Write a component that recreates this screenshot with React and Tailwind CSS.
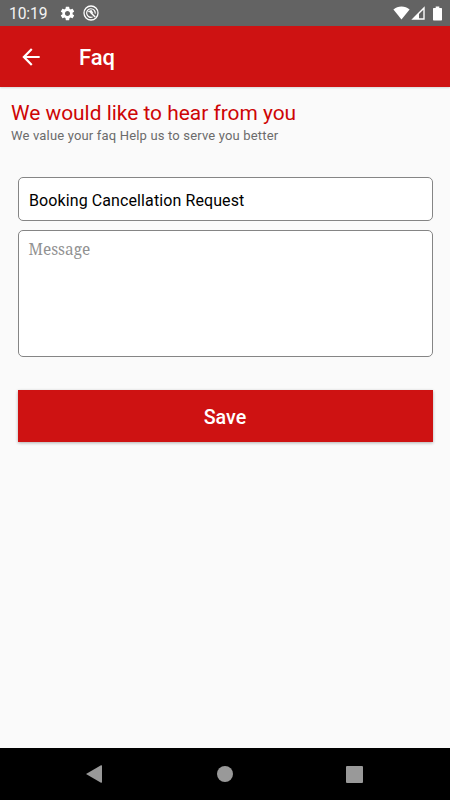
import { useState } from "react";
import { MdArrowBack, MdSettings } from "react-icons/md";

const StatusBar = () => (
  <div className="h-[26px] shrink-0 bg-[#636363] text-white flex items-center justify-between pl-[9px] pr-[8px]">
    <div className="flex items-center">
      <span className="w-[50px] text-[15.6px] leading-[26px] tracking-[-0.1px] whitespace-nowrap pt-[2px] text-[#f4f4f4]">10:19</span>
      <MdSettings size={17} />
      <svg className="ml-[7px]" width="16" height="16" viewBox="0 0 16 16" fill="none" stroke="currentColor">
        <circle cx="8" cy="8" r="7" strokeWidth="1.3" />
        <path d="M9.6 12A4.3 4.3 0 1 1 12.2 8.6" strokeWidth="1.2" />
        <path d="M7.4 7.2L12.2 12" strokeWidth="1.5" />
        <path d="M5.2 6.6L8.4 5.2L10 8.2L7.4 7.2Z" fill="currentColor" strokeWidth="0.6" />
      </svg>
    </div>
    <div className="flex items-center">
      {/* Wifi */}
      <svg width="17" height="14" viewBox="0 0 17 14" fill="currentColor">
        <path d="M8.5 13.6L0.4 3.6C2.6 1.6 5.4 0.5 8.5 0.5S14.4 1.6 16.6 3.6Z" />
      </svg>
      {/* Signal */}
      <svg className="ml-px" width="14" height="14" viewBox="0 0 14 14">
        <path d="M0.3 13.7L13.7 0.3V13.7Z" fill="white" />
        <path d="M8 12.3V8L12.3 3.7V12.3Z" fill="#636363" />
      </svg>
      {/* Battery */}
      <svg className="ml-[8px]" width="9" height="15" viewBox="0 0 9 15" fill="currentColor">
        <path d="M2.7 0.5H6.3V2H8.3Q9 2 9 2.7V13.8Q9 14.5 8.3 14.5H0.7Q0 14.5 0 13.8V2.7Q0 2 0.7 2H2.7Z" />
      </svg>
    </div>
  </div>
);

const NavBar = () => (
  <div className="h-[52px] shrink-0 bg-black flex items-center justify-between pl-[86px] pr-[87px] text-[#999999]">
    <svg width="16" height="18" viewBox="0 0 16 18" fill="currentColor">
      <path d="M0 9L15 0.3Q16 0 16 1V17Q16 18 15 17.7Z" />
    </svg>
    <div className="size-4 ml-px rounded-full bg-[#999999]"></div>
    <div className="size-[17px] rounded-[1px] bg-[#999999]"></div>
  </div>
);

const App = () => {
  const [subject, setSubject] = useState("Booking Cancellation Request");
  const [message, setMessage] = useState("");

  return (
    <div className="w-full h-screen flex flex-col overflow-hidden bg-[#fafafa] font-['Roboto',sans-serif]">
      <StatusBar />

      {/* App bar */}
      <header className="h-[61px] shrink-0 bg-[#ce1212] text-white flex items-center pl-[18px] shadow-[0_1px_2px_rgba(0,0,0,0.15)]">
        <button type="button" aria-label="Back" className="w-[61px]">
          <MdArrowBack size={26} />
        </button>
        <h1 className="text-[22px] leading-[26px] font-medium pt-[3px]">Faq</h1>
      </header>

      <main className="flex-1 flex flex-col pt-[13px]">
        <h2 className="pl-[11px] text-[20.9px] leading-[27px] font-normal text-[#ce0505] whitespace-nowrap">
          We would like to hear from you
        </h2>
        <p className="pl-[11px] text-[13px] leading-[18px] tracking-[0.17px] text-[#6b6b6b] whitespace-nowrap">
          We value your faq Help us to serve you better
        </p>

        <form className="flex flex-col pt-[32px] pl-[17.5px] pr-[17.5px]">
          <input
            type="text"
            value={subject}
            onChange={(e) => setSubject(e.target.value)}
            className="h-[44px] px-[10.5px] pt-[3px] bg-white border border-[#858585] rounded-[5px] text-[16px] tracking-[0.1px] text-black outline-none"
          />
          <textarea
            placeholder="Message"
            value={message}
            onChange={(e) => setMessage(e.target.value)}
            className="mt-[9px] h-[127px] px-[10px] py-[8px] bg-white border border-[#858585] rounded-[5px] text-[15.4px] leading-[22px] font-['Noto_Serif','DejaVu_Serif_Condensed','DejaVu_Serif',serif] placeholder:text-[#919191] resize-none outline-none"
          />
          <button
            type="button"
            className="mt-[33px] h-[52px] pt-[3px] bg-[#ce1212] text-white text-[19.7px] font-medium shadow-[0_1px_3px_rgba(0,0,0,0.3)]"
          >
            Save
          </button>
        </form>
      </main>

      <NavBar />
    </div>
  );
};

export default App;
